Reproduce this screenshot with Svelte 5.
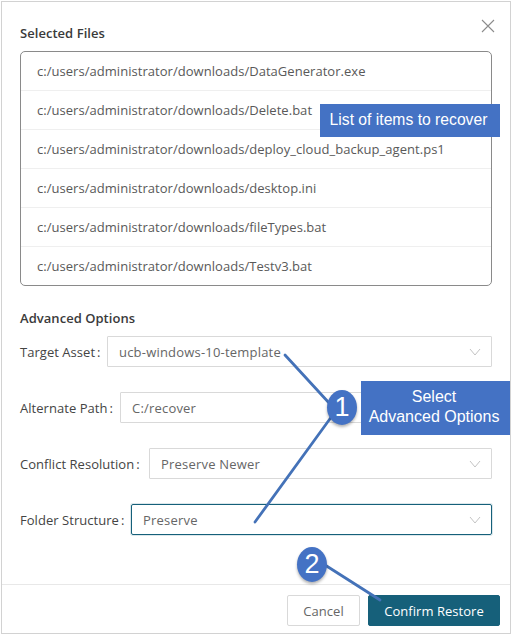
<script>
  const files = [
    'DataGenerator.exe',
    'Delete.bat',
    'deploy_cloud_backup_agent.ps1',
    'desktop.ini',
    'fileTypes.bat',
    'Testv3.bat'
  ];
  const fields = [
    { label: 'Target Asset', value: 'ucb-windows-10-template', arrow: true, w: 87 },
    { label: 'Alternate Path', value: 'C:/recover', arrow: false, w: 100 },
    { label: 'Conflict Resolution', value: 'Preserve Newer', arrow: true, w: 129 },
    { label: 'Folder Structure', value: 'Preserve', arrow: true, focus: true, w: 111 }
  ];
</script>

<div class="dialog">
  <button class="close" aria-label="Close">
    <svg width="14" height="14" viewBox="0 0 14 14"><path d="M1 1 L13 13 M13 1 L1 13" stroke="#8c8c8c" stroke-width="1.1" fill="none" /></svg>
  </button>
  <div class="body">
    <h2 class="title">Selected Files</h2>
    <ul class="list">
      {#each files as f}
        <li>c:/users/administrator/downloads/{f}</li>
      {/each}
    </ul>
    <h2 class="title adv">Advanced Options</h2>
    <div class="form">
      {#each fields as fd}
        <div class="row">
          <span class="label" style="width: {fd.w}px">{fd.label}<span class="colon">:</span></span>
          <div class="input" class:focus={fd.focus}>
            <span>{fd.value}</span>
            {#if fd.arrow}
              <svg class="arrow" width="12" height="8" viewBox="0 0 12 8"><path d="M1 1 L6 7 L11 1" stroke="#c4c4c4" stroke-width="1" fill="none" /></svg>
            {/if}
          </div>
        </div>
      {/each}
    </div>
  </div>
  <div class="footer">
    <button class="btn">Cancel</button>
    <button class="btn primary">Confirm Restore</button>
  </div>

  <svg class="lines" width="512" height="634" viewBox="0 0 512 634">
    <g stroke="#4472b8" stroke-width="2.8" fill="none" stroke-linecap="round">
      <path d="M285 355 L330 404" />
      <path d="M332 416 L255 522" />
      <path d="M325 565 L380 600" />
    </g>
  </svg>
  <div class="badge one">1</div>
  <div class="badge two">2</div>
  <div class="note items">List of items to recover</div>
  <div class="note select">Select<br />Advanced Options</div>
</div>

<style>
  :global(body) {
    margin: 0;
    background: #fff;
  }
  .dialog {
    position: relative;
    box-sizing: border-box;
    width: 510px;
    height: 633px;
    margin: 1px 0 0 1px;
    border: 1px solid #d2d2d2;
    background: #fff;
    font-family: "Open Sans", "Noto Sans", sans-serif;
    font-size: 13px;
    letter-spacing: 0.04px;
    color: #595959;
    display: flex;
    flex-direction: column;
  }
  .close {
    position: absolute;
    top: 17px;
    right: 15px;
    padding: 0;
    border: 0;
    background: none;
    line-height: 0;
  }
  .body {
    flex: 1;
    padding: 22px 18px 0 18px;
  }
  .title {
    margin: 0;
    font-size: 13px;
    font-weight: 600;
    line-height: 18px;
    color: #3a3a3a;
  }
  .list {
    list-style: none;
    margin: 9px 0 0;
    padding: 0;
    box-sizing: border-box;
    height: 235px;
    border: 1px solid #8a8a8a;
    border-radius: 5px;
    overflow: hidden;
  }
  .list li {
    height: 39px;
    box-sizing: border-box;
    padding-left: 16px;
    line-height: 38px;
    border-bottom: 1px solid #efefef;
  }
  .list li:last-child {
    border-bottom: 0;
  }
  .adv {
    margin-top: 23px;
  }
  .form {
    margin-top: 9px;
    display: flex;
    flex-direction: column;
    gap: 25px;
  }
  .row {
    display: flex;
    align-items: center;
    height: 31px;
  }
  .label {
    color: #444;
    white-space: nowrap;
    flex: none;
  }
  .colon {
    margin-left: 2px;
  }
  .input {
    flex: 1;
    box-sizing: border-box;
    height: 31px;
    border: 1px solid #d9d9d9;
    display: flex;
    align-items: center;
    justify-content: space-between;
    padding: 0 10px 0 11px;
    color: #666;
    letter-spacing: 0.2px;
    border-radius: 1px;
  }
  .input.focus {
    border-color: #16607a;
    box-shadow: 0 0 0 1px rgba(22, 96, 122, 0.15);
    border-radius: 2px;
  }
  .footer {
    height: 49px;
    border-top: 1px solid #e8e8e8;
    display: flex;
    justify-content: flex-end;
    align-items: flex-start;
    gap: 8px;
    padding: 10px 10px 0 0;
    box-sizing: border-box;
  }
  .btn {
    height: 31px;
    width: 73px;
    font: inherit;
    letter-spacing: inherit;
    color: #666;
    background: #fff;
    border: 1px solid #d9d9d9;
    border-radius: 2px;
    padding: 0;
  }
  .btn.primary {
    width: 132px;
    background: #16607a;
    border-color: #16607a;
    color: #fff;
  }
  .lines {
    position: absolute;
    left: -2px;
    top: -2px;
    pointer-events: none;
  }
  .badge {
    position: absolute;
    width: 30px;
    height: 35px;
    border-radius: 50%;
    background: #4472c4;
    color: #fff;
    font-family: "Liberation Sans", Arial, sans-serif;
    font-size: 27px;
    line-height: 35px;
    letter-spacing: 0;
    text-align: center;
    box-shadow: 0 2px 3px rgba(0, 0, 0, 0.3);
  }
  .badge.one {
    left: 325px;
    top: 388px;
  }
  .badge.two {
    left: 295px;
    top: 545px;
  }
  .note {
    position: absolute;
    background: #4472c4;
    color: #fff;
    font-family: "Liberation Sans", Arial, sans-serif;
    font-size: 16px;
    letter-spacing: 0;
    text-align: center;
  }
  .note.items {
    left: 318px;
    top: 102px;
    width: 180px;
    height: 33px;
    line-height: 31px;
    font-size: 15.7px;
    padding-right: 3px;
    box-sizing: border-box;
  }
  .note.select {
    left: 359px;
    top: 379px;
    width: 149px;
    height: 54px;
    line-height: 20px;
    padding: 6px 3px 0 0;
    box-sizing: border-box;
  }
</style>
